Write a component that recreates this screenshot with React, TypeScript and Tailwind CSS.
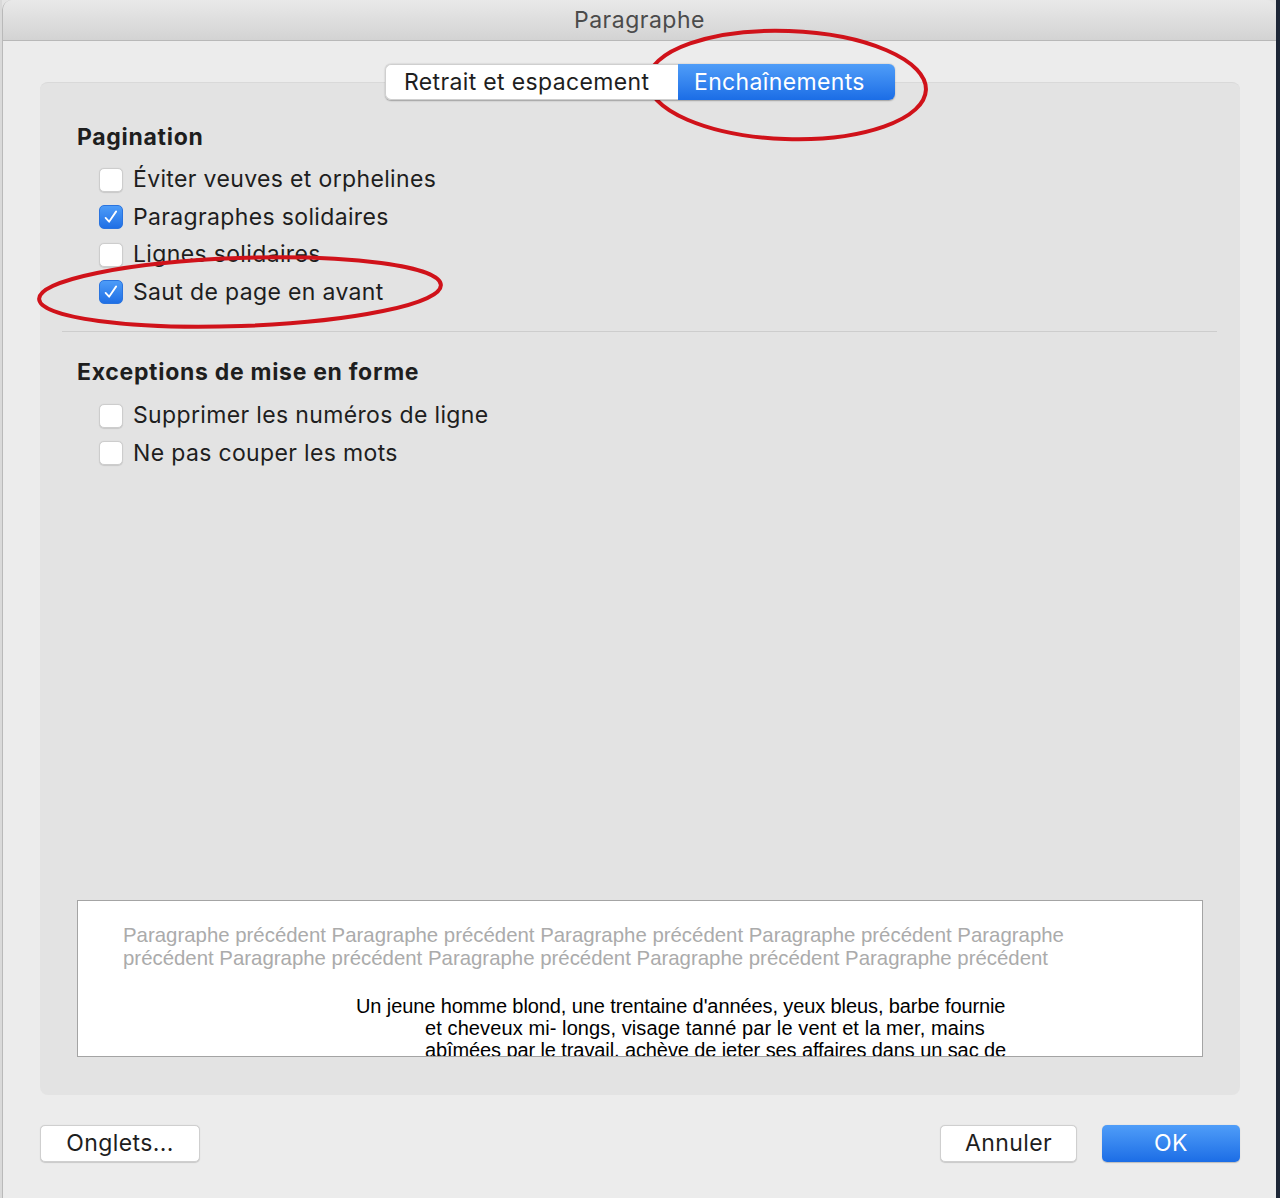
import React from "react";

const font = { fontFamily: "Inter, 'Noto Sans', sans-serif" };

function Check({ checked }: { checked?: boolean }) {
  if (checked) {
    return (
      <div className="w-[24px] h-[24px] rounded-[5px] bg-gradient-to-b from-[#4d9cf8] to-[#1f6fe5] border border-[#2a74df] flex items-center justify-center shrink-0">
        <svg width="18" height="18" viewBox="0 0 16 16">
          <path d="M3.2 8.8 L6.3 12.2 L12.6 3" fill="none" stroke="white" strokeWidth="1.6" strokeLinecap="round" strokeLinejoin="round" />
        </svg>
      </div>
    );
  }
  return <div className="w-[24px] h-[24px] rounded-[5px] bg-white border border-[#cdcdcd] shadow-[0_0.5px_1px_rgba(0,0,0,0.12)] shrink-0" />;
}

function Row({ label, checked }: { label: string; checked?: boolean }) {
  return (
    <div className="h-[37.5px] flex items-center gap-[10px] pl-[22px]">
      <Check checked={checked} />
      <span className="text-[23px] tracking-[0.35px] text-[#1e1e1e] leading-none">{label}</span>
    </div>
  );
}

export default function App() {
  return (
    <div className="relative w-[1280px] h-[1198px] flex bg-[#e4e4e4] overflow-hidden" style={font}>
      <div className="w-[2px] bg-[#d9d9d9]" />
      <div className="flex-1 flex flex-col border-l border-[#b9b9b9] rounded-tl-[10px] rounded-tr-[10px] overflow-hidden">
        <div className="h-[41px] shrink-0 flex items-center justify-center bg-gradient-to-b from-[#e9e9e9] to-[#d3d3d3] border-b border-[#b8b8b8]">
          <span className="text-[23px] tracking-[0.5px] text-[#4b4b4b]">Paragraphe</span>
        </div>
        <div className="flex-1 bg-[#ececec] flex flex-col pl-[37px] pr-[36px]">
          <div className="relative z-10 flex justify-center mt-[23px] h-[36px]">
            <div className="flex h-[36px] rounded-[6px] shadow-[0_0.5px_1.5px_rgba(0,0,0,0.3)]">
              <div className="w-[293px] h-full bg-white rounded-l-[6px] border border-[#cfcfcf] border-r-0 flex items-center pl-[18px] text-[23px] tracking-[0.35px] text-[#1e1e1e] overflow-hidden whitespace-nowrap">
                Retrait et espacement
              </div>
              <div className="w-[217px] h-full bg-gradient-to-b from-[#4f9df8] to-[#1b6de6] rounded-r-[6px] flex items-center pl-[16px] text-[23px] tracking-[0.35px] text-white">
                Enchaînements
              </div>
            </div>
          </div>
          <div className="-mt-[18px] h-[1013px] bg-[#e3e3e3] rounded-[8px] border-t border-[#d9d9d9] flex flex-col">
            <div className="pl-[37px] pt-[40px]">
              <div className="h-[28px] flex items-center text-[23px] tracking-[0.7px] font-bold text-[#1e1e1e]">Pagination</div>
              <div className="mt-[10px]">
                <Row label="Éviter veuves et orphelines" />
                <Row label="Paragraphes solidaires" checked />
                <Row label="Lignes solidaires" />
                <Row label="Saut de page en avant" checked />
              </div>
            </div>
            <div className="ml-[22px] mr-[23px] mt-[20px] h-px bg-[#cdcdcd]" />
            <div className="pl-[37px] pt-[26px]">
              <div className="h-[28px] flex items-center text-[23px] tracking-[0.7px] font-bold text-[#1e1e1e]">Exceptions de mise en forme</div>
              <div className="mt-[11px]">
                <Row label="Supprimer les numéros de ligne" />
                <Row label="Ne pas couper les mots" />
              </div>
            </div>
            <div className="flex-1" />
            <div
              className="mx-[37px] mb-[38px] h-[157px] bg-white border border-[#a4a4a4] overflow-hidden"
              style={{ fontFamily: "'Liberation Sans', Arial, sans-serif" }}
            >
              <div className="pt-[23px] pl-[45px] text-[20.4px] leading-[23px] text-[#ababab] whitespace-nowrap">
                <div>Paragraphe précédent Paragraphe précédent Paragraphe précédent Paragraphe précédent Paragraphe</div>
                <div>précédent Paragraphe précédent Paragraphe précédent Paragraphe précédent Paragraphe précédent</div>
              </div>
              <div className="mt-[25px] text-[20px] leading-[22px] text-black whitespace-nowrap">
                <div className="pl-[278px] tracking-[-0.1px]">Un jeune homme blond, une trentaine d'années, yeux bleus, barbe fournie</div>
                <div className="pl-[347px] tracking-[0.1px]">et cheveux mi- longs, visage tanné par le vent et la mer, mains</div>
                <div className="pl-[347px] tracking-[-0.1px]">abîmées par le travail, achève de jeter ses affaires dans un sac de</div>
              </div>
            </div>
          </div>
          <div className="mt-[30px] flex items-center">
            <button className="w-[160px] h-[37px] bg-white rounded-[5px] border border-[#cfcfcf] shadow-[0_0.5px_1px_rgba(0,0,0,0.15)] text-[23px] tracking-[0.4px] text-[#1e1e1e]">
              Onglets...
            </button>
            <div className="flex-1" />
            <button className="w-[137px] h-[37px] bg-white rounded-[5px] border border-[#cfcfcf] shadow-[0_0.5px_1px_rgba(0,0,0,0.15)] text-[23px] tracking-[0.4px] text-[#1e1e1e]">
              Annuler
            </button>
            <button className="ml-[25px] w-[138px] h-[37px] rounded-[5px] bg-gradient-to-b from-[#4f9df8] to-[#1b6de6] shadow-[0_0.5px_1px_rgba(0,0,0,0.2)] text-[23px] tracking-[0.4px] text-white">
              OK
            </button>
          </div>
        </div>
      </div>
      <div className="w-[4px] bg-[#1d2636]" />
      <svg className="absolute inset-0 pointer-events-none" width="1280" height="1198">
        <ellipse cx="787" cy="85" rx="139" ry="54" transform="rotate(2 787 85)" fill="none" stroke="#d0121a" strokeWidth="4" />
        <ellipse cx="240" cy="292" rx="201" ry="34" transform="rotate(-2 240 292)" fill="none" stroke="#d0121a" strokeWidth="4" />
      </svg>
    </div>
  );
}
